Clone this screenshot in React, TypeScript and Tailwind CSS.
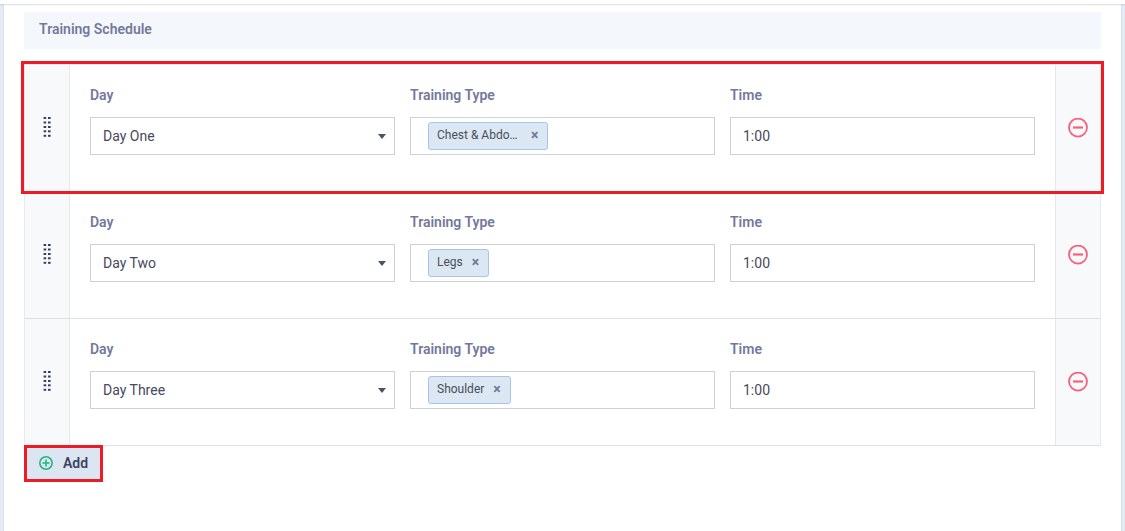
import { useState } from "react";
import clsx from "clsx";

type Session = {
	id: number;
	day: string;
	types: string[];
	time: string;
};

const days = ["Day One", "Day Two", "Day Three"];

const initialSessions: Session[] = [
	{ id: 1, day: "Day One", types: ["Chest & Abdo…"], time: "1:00" },
	{ id: 2, day: "Day Two", types: ["Legs"], time: "1:00" },
	{ id: 3, day: "Day Three", types: ["Shoulder"], time: "1:00" },
];

const labelClass = "block mb-3 text-sm leading-5 font-semibold text-[#74789c]";
const fieldClass =
	"w-full h-[38px] border border-[#cdd1d8] bg-white text-sm text-[#464a5c] outline-none focus:border-[#a5c3e6]";

function GripIcon() {
	return (
		<svg width="8" height="20" viewBox="0 0 8 20" fill="#3a3c66">
			{[0, 4.5, 9, 13.3, 17.8].map((y) => (
				<g key={y}>
					<rect x="0.6" y={y} width="2.6" height="2" />
					<rect x="5" y={y} width="2.6" height="2" />
				</g>
			))}
		</svg>
	);
}

function RemoveIcon() {
	return (
		<svg width="20" height="20" viewBox="0 0 20 20" fill="none" stroke="#fa5f7c">
			<circle cx="10" cy="9.6" r="9" strokeWidth="1.8" />
			<path d="M5 9.5h10" strokeWidth="2.2" />
		</svg>
	);
}

function AddIcon() {
	return (
		<svg
			width="14"
			height="14"
			viewBox="0 0 14 14"
			fill="none"
			stroke="#1fb57a"
			strokeWidth="1.5"
		>
			<circle cx="7" cy="7" r="6.2" />
			<path d="M7 3.5v7M3.5 7h7" />
		</svg>
	);
}

export default function App() {
	const [sessions, setSessions] = useState(initialSessions);

	const update = (id: number, changes: Partial<Session>) => {
		setSessions((prev) =>
			prev.map((s) => (s.id === id ? { ...s, ...changes } : s))
		);
	};

	const addSession = () => {
		setSessions((prev) => [
			...prev,
			{ id: Date.now(), day: days[0], types: [], time: "1:00" },
		]);
	};

	const removeSession = (id: number) => {
		setSessions((prev) => prev.filter((s) => s.id !== id));
	};

	return (
		<div className="min-h-screen flex flex-col bg-[#e5ebf4] font-[Roboto,sans-serif]">
			<header className="relative h-1 bg-white shadow-[0_1px_2px_rgba(0,0,0,0.14)]" />

			<main className="grow mx-[3px] px-5 pt-2 border-x border-[#dde2ea] bg-white">
				<h2 className="mb-[15px] px-[15px] pt-[7px] pb-[10px] bg-[#f4f8fc] text-sm leading-5 font-semibold text-[#74789c]">
					Training Schedule
				</h2>

				<ul className="border-x border-t border-[#e8eaed]">
					{sessions.map((session, index) => (
						<li
							key={session.id}
							className="relative flex border-b border-[#dcdfe4]"
						>
							<div className="w-[45px] shrink-0 flex items-center justify-center pb-[3px] border-r border-[#e6e8eb] bg-[#f8f9fb] cursor-move">
								<GripIcon />
							</div>

							<div className="grow grid grid-cols-3 gap-[15px] px-5 pt-5 pb-9">
								<div>
									<label htmlFor={`day-${session.id}`} className={labelClass}>
										Day
									</label>
									<div className="relative">
										<select
											id={`day-${session.id}`}
											value={session.day}
											onChange={(e) =>
												update(session.id, { day: e.target.value })
											}
											className={`${fieldClass} appearance-none px-3`}
										>
											{days.map((day) => (
												<option key={day}>{day}</option>
											))}
										</select>
										<svg
											className="absolute right-2 top-4 mt-px pointer-events-none"
											width="10"
											height="5"
											viewBox="0 0 10 5"
											fill="#495362"
										>
											<path d="M1 0h8L5 5z" />
										</svg>
									</div>
								</div>

								<div>
									<label htmlFor={`type-${session.id}`} className={labelClass}>
										Training Type
									</label>
									<div className={`${fieldClass} flex items-start gap-1 pl-[17px] pt-1`}>
										{session.types.map((type) => (
											<span
												key={type}
												className="h-7 shrink-0 flex items-center gap-[9px] pl-2 pr-[9px] pb-0.5 border border-[#a9c5e6] rounded-[3px] bg-[#dbe7f3] text-xs text-[#495057]"
											>
												<span className={clsx(type.endsWith("…") && "w-[85px]")}>
													{type}
												</span>
												<button
													type="button"
													aria-label={`Remove ${type}`}
													onClick={() =>
														update(session.id, {
															types: session.types.filter((t) => t !== type),
														})
													}
													className="text-sm leading-4 font-bold text-[#74789c] cursor-pointer"
												>
													×
												</button>
											</span>
										))}
										<input
											id={`type-${session.id}`}
											type="text"
											className="grow min-w-0 h-7 bg-transparent outline-none"
										/>
									</div>
								</div>

								<div>
									<label htmlFor={`time-${session.id}`} className={labelClass}>
										Time
									</label>
									<input
										id={`time-${session.id}`}
										type="text"
										value={session.time}
										onChange={(e) =>
											update(session.id, { time: e.target.value })
										}
										className={`${fieldClass} px-3`}
									/>
								</div>
							</div>

							<div className="w-[45px] shrink-0 flex items-center justify-center border-l border-[#e6e8eb] bg-[#f8f9fb]">
								<button
									type="button"
									aria-label="Remove day"
									onClick={() => removeSession(session.id)}
									className="cursor-pointer"
								>
									<RemoveIcon />
								</button>
							</div>

							{/* Highlight around the first entry */}
							{index === 0 && (
								<div className="absolute -inset-x-1 -top-1 -bottom-[3px] z-10 border-3 border-[#ed1c24] pointer-events-none" />
							)}
						</li>
					))}
				</ul>

				<button
					type="button"
					onClick={addSession}
					className="relative -mt-px h-[37px] flex items-center gap-[10px] px-3 pb-0.5 border-3 border-[#ed1c24] bg-[#dbe6f2] text-sm font-semibold text-[#40415f] cursor-pointer"
				>
					<AddIcon />
					Add
				</button>
			</main>
		</div>
	);
}
